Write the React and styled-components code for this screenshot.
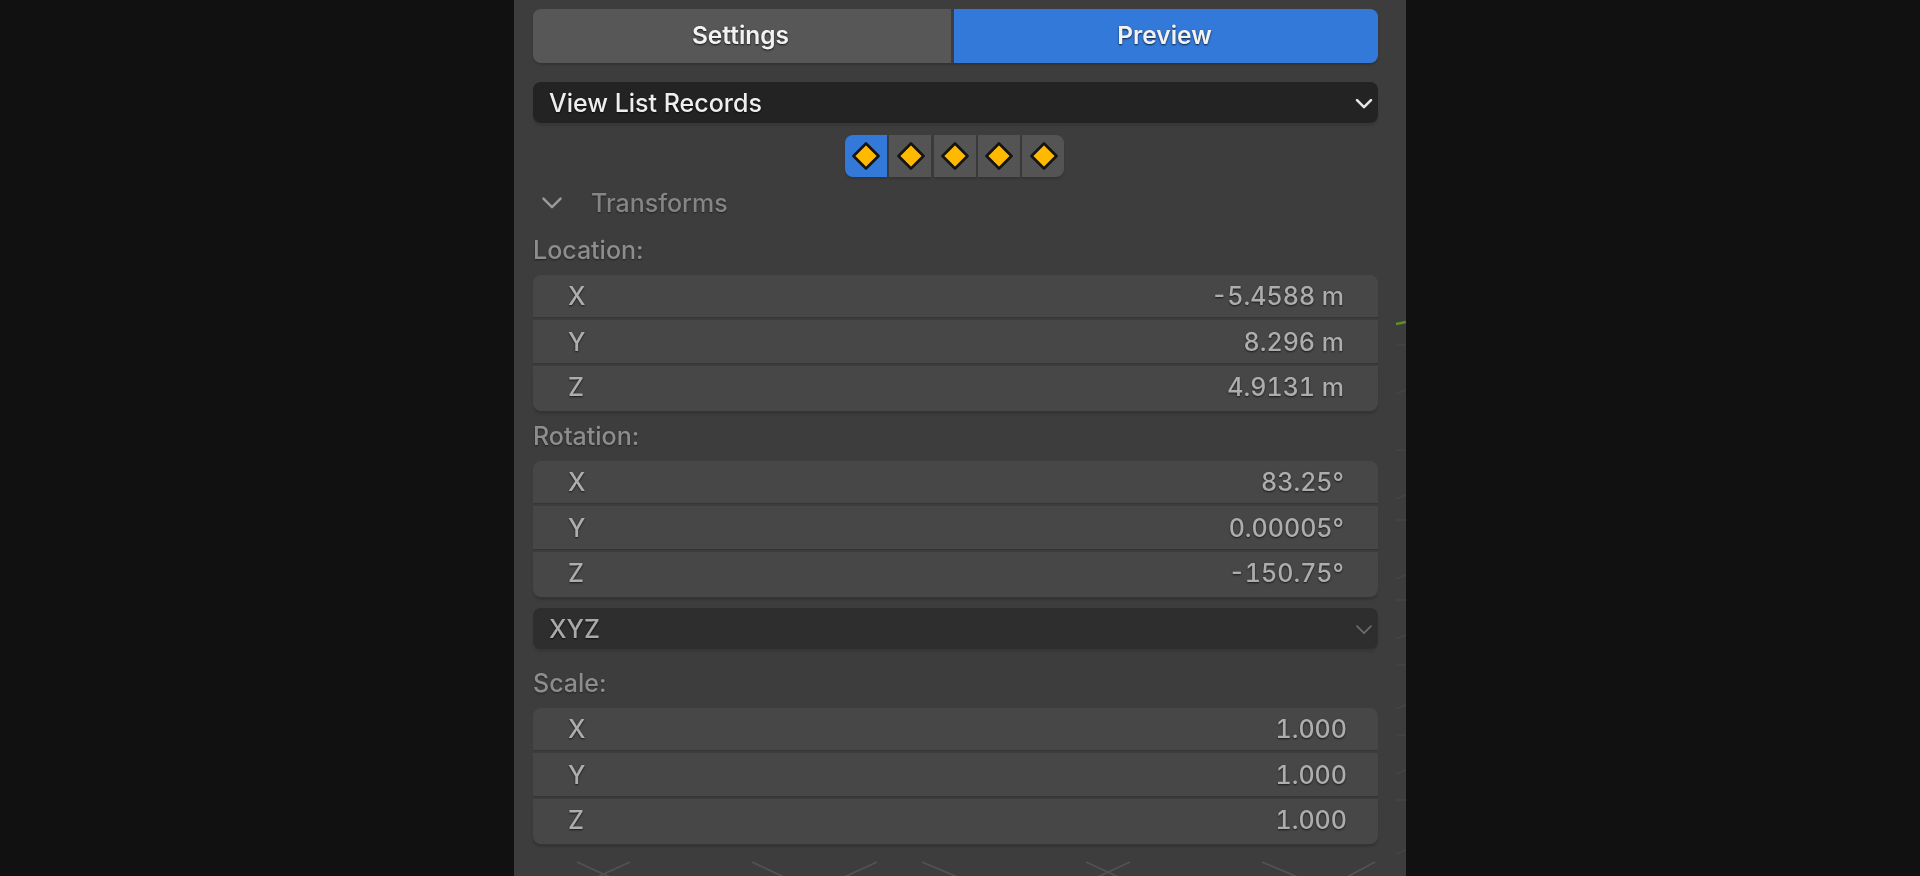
import React from "react";
import styled, { createGlobalStyle } from "styled-components";

const Global = createGlobalStyle`
  html, body { margin: 0; padding: 0; background: #111111; }
  body { font-family: Inter, "Noto Sans", sans-serif; overflow: hidden; }
  #root { height: 876px; }
`;
const Page = styled.div`
  height: 876px;
  display: flex;
  justify-content: center;
  overflow: hidden;
`;
const Panel = styled.main`
  position: relative;
  width: 892px;
  height: 876px;
  box-sizing: border-box;
  padding: 9px 28px 0 19px;
  background: #3d3d3d;
  display: flex;
  flex-direction: column;
  overflow: hidden;
  filter: blur(0.5px);
`;
const Tabs = styled.div`
  display: grid;
  grid-template-columns: 418px 1fr;
  gap: 3px;
  height: 54px;
  box-shadow: 0 2px 2px rgba(0, 0, 0, 0.16);
  border-radius: 8px;
`;
const Tab = styled.div`
  display: flex;
  align-items: center;
  justify-content: center;
  padding: 0 3px 2px 0;
  font-size: 24.5px;
  font-weight: 600;
  color: #f2f2f2;
  text-shadow: 0 1px 2px rgba(0, 0, 0, 0.75);
  background: ${(p) => (p.$active ? "#3379d9" : "#575757")};
  border-radius: ${(p) => (p.$active ? "0 8px 8px 0" : "8px 0 0 8px")};
`;
const Select = styled.div`
  display: flex;
  align-items: center;
  justify-content: space-between;
  height: 41px;
  box-sizing: border-box;
  padding: 0 5px 0 16px;
  margin-top: ${(p) => p.$top}px;
  border-radius: 8px;
  font-size: 25px;
  font-weight: 500;
  color: ${(p) => (p.$dim ? "#a9a9a9" : "#eeeeee")};
  text-shadow: 0 1px 2px rgba(0, 0, 0, 0.7);
  background: ${(p) => (p.$dim ? "#2e2e2e" : "#232323")};
  box-shadow: 0 3px 2px rgba(0, 0, 0, 0.1);
  svg { display: block; margin-top: 3px; }
`;
const KeyRow = styled.div`
  display: flex;
  justify-content: center;
  gap: 2.3px;
  margin: 12px 2px 0 0;
`;
const KeyButton = styled.div`
  width: 42px;
  height: 42px;
  padding-left: 1px;
  box-sizing: border-box;
  display: flex;
  align-items: center;
  justify-content: center;
  background: ${(p) => (p.$active ? "#3379d9" : "#545454")};
  box-shadow: 0 2px 2px rgba(0, 0, 0, 0.15);
  &:first-child { border-radius: 8px 0 0 8px; }
  &:last-child { border-radius: 0 8px 8px 0; }
`;
const SectionHeader = styled.div`
  display: flex;
  align-items: center;
  gap: 28px;
  height: 36px;
  margin-top: 8px;
  padding-left: 8px;
  font-size: 25px;
  font-weight: 500;
  color: #858585;
  text-shadow: 0 1px 2px rgba(0, 0, 0, 0.45);
  svg { display: block; }
`;
const FieldLabel = styled.div`
  height: 50px;
  display: flex;
  align-items: center;
  margin-top: ${(p) => p.$top}px;
  font-size: 25px;
  font-weight: 500;
  color: #8d8d8d;
  text-shadow: 0 1px 2px rgba(0, 0, 0, 0.45);
`;
const FieldGroup = styled.div`
  display: grid;
  grid-template-rows: 42px 43px 45px;
  gap: 3px;
`;
const FieldRow = styled.div`
  display: flex;
  align-items: center;
  justify-content: space-between;
  padding: 0 ${(p) => p.$right}px 0 35px;
  background: #474747;
  font-size: 25px;
  font-weight: 500;
  color: #adadad;
  text-shadow: 0 1px 2px rgba(0, 0, 0, 0.65);
  font-feature-settings: "tnum";
  box-shadow: 0 1px 1px rgba(0, 0, 0, 0.12);
  &:first-child { border-radius: 8px 8px 0 0; }
  &:last-child { border-radius: 0 0 8px 8px; padding-bottom: 3px; box-shadow: 0 3px 2px rgba(0, 0, 0, 0.14); }
`;
const ViewportMarks = styled.svg`
  position: absolute;
  left: 0;
  top: 0;
  pointer-events: none;
`;

const Diamond = () => (
  <svg width="28" height="28" viewBox="0 0 28 28">
    <polygon points="14,1.5 26.5,14 14,26.5 1.5,14" fill="#ffb900" stroke="#141414" strokeWidth="2.6" strokeLinejoin="round" />
  </svg>
);
const Chevron = ({ size = 18, stroke = "#e6e6e6", width = 2.6 }) => (
  <svg width={size} height={size * 0.62} viewBox="0 0 18 11">
    <path d="M2 2 L9 9 L16 2" fill="none" stroke={stroke} strokeWidth={width} strokeLinecap="round" strokeLinejoin="round" />
  </svg>
);

const Group = ({ rows, right = 34 }) => (
  <FieldGroup>
    {rows.map(([axis, value]) => (
      <FieldRow key={axis} $right={right}>
        <span>{axis}</span>
        <span>{value}</span>
      </FieldRow>
    ))}
  </FieldGroup>
);

const marks = [
  [63, 862, 111, 884], [116, 862, 68, 884],
  [238, 862, 272, 878], [363, 862, 328, 878], [408, 862, 446, 878],
  [572, 862, 611, 880], [616, 862, 577, 880],
  [748, 862, 786, 878], [861, 862, 831, 878],
];
const ticks = [345, 390, 450, 495, 520, 575, 600, 635, 665, 705, 735, 770, 800, 850];

export default function App() {
  return (
    <Page>
      <Global />
      <Panel>
        <Tabs>
          <Tab>Settings</Tab>
          <Tab $active>Preview</Tab>
        </Tabs>
        <Select $top={19}>
          <span>View List Records</span>
          <Chevron />
        </Select>
        <KeyRow>
          {[0, 1, 2, 3, 4].map((i) => (
            <KeyButton key={i} $active={i === 0}>
              <Diamond />
            </KeyButton>
          ))}
        </KeyRow>
        <SectionHeader>
          <Chevron size={22} stroke="#9a9a9a" width={2} />
          <span>Transforms</span>
        </SectionHeader>
        <FieldLabel $top={4}>Location:</FieldLabel>
        <Group rows={[["X", "-5.4588 m"], ["Y", "8.296 m"], ["Z", "4.9131 m"]]} />
        <FieldLabel $top={0}>Rotation:</FieldLabel>
        <Group rows={[["X", "83.25°"], ["Y", "0.00005°"], ["Z", "-150.75°"]]} />
        <Select $top={11} $dim>
          <span>XYZ</span>
          <Chevron stroke="#6e6e6e" width={1.6} />
        </Select>
        <FieldLabel $top={9}>Scale:</FieldLabel>
        <Group right={31} rows={[["X", "1.000"], ["Y", "1.000"], ["Z", "1.000"]]} />
        <ViewportMarks width="892" height="876" viewBox="0 0 892 876">
          {marks.map(([a, b, c, d], i) => (
            <line key={i} x1={a} y1={b} x2={c} y2={d} stroke="#525252" strokeWidth="1.8" />
          ))}
          {ticks.map((y, i) => (
            <line key={y} x1="882" y1={y + (i % 2 ? 4 : 0)} x2="892" y2={y} stroke="#454545" strokeWidth="1.5" />
          ))}
          <line x1="882" y1="324" x2="892" y2="322" stroke="#5d8f22" strokeWidth="2.5" />
        </ViewportMarks>
      </Panel>
    </Page>
  );
}
